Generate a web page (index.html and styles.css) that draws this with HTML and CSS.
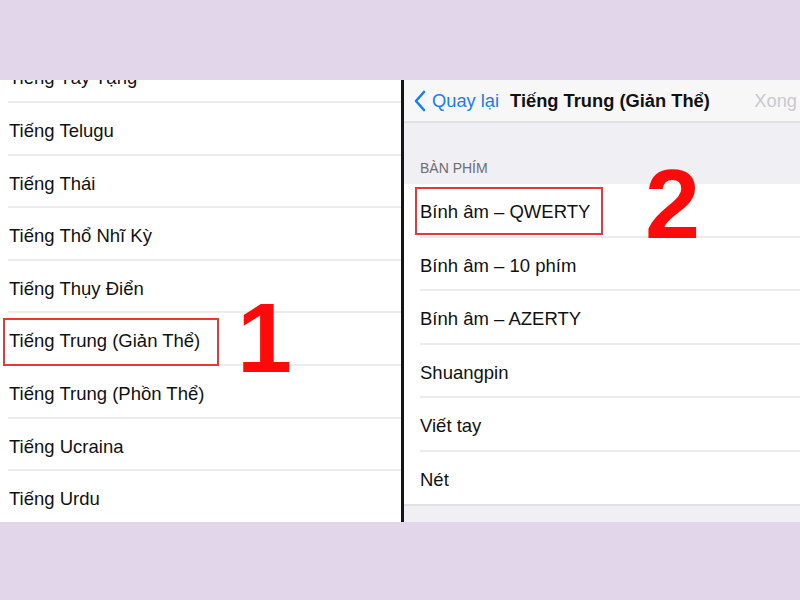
FILE: index.html
```html
<!DOCTYPE html>
<html lang="vi">
<head>
<meta charset="utf-8">
<link rel="stylesheet" href="styles.css">
</head>
<body>
<div class="band"></div>
<main class="screens">
  <section class="left">
    <ul class="list">
      <li class="row">Tiếng Tày Tạng</li>
      <li class="row">Tiếng Telugu</li>
      <li class="row">Tiếng Thái</li>
      <li class="row">Tiếng Thổ Nhĩ Kỳ</li>
      <li class="row">Tiếng Thụy Điển</li>
      <li class="row marked">Tiếng Trung (Giản Thể)<span class="redbox box1"></span></li>
      <li class="row">Tiếng Trung (Phồn Thể)</li>
      <li class="row">Tiếng Ucraina</li>
      <li class="row last">Tiếng Urdu</li>
    </ul>
    <span class="step step1">1</span>
  </section>
  <div class="divider"></div>
  <section class="right">
    <header class="nav">
      <span class="back">
        <svg class="chev" width="13" height="22" viewBox="0 0 13 22"><path d="M11 2 L3 11 L11 20" fill="none" stroke="#1a7cf5" stroke-width="2.6" stroke-linecap="round" stroke-linejoin="round"/></svg>
        <span class="back-label">Quay lại</span>
      </span>
      <span class="title">Tiếng Trung (Giản Thể)</span>
      <span class="done">Xong</span>
    </header>
    <div class="section-head">BÀN PHÍM</div>
    <ul class="group">
      <li class="grow marked">Bính âm – QWERTY<span class="redbox box2"></span></li>
      <li class="grow">Bính âm – 10 phím</li>
      <li class="grow">Bính âm – AZERTY</li>
      <li class="grow">Shuangpin</li>
      <li class="grow">Viết tay</li>
      <li class="grow last">Nét</li>
    </ul>
    <span class="step step2">2</span>
  </section>
</main>
<div class="band"></div>
</body>
</html>
```

FILE: styles.css
```css
html, body {
  margin: 0;
  padding: 0;
}
body {
  width: 800px;
  height: 600px;
  overflow: hidden;
  background: #e2d7ea;
  font-family: "Liberation Sans", Arial, sans-serif;
  color: #111;
}
.band {
  height: 80px;
  background: #e2d7ea;
}
.band:last-child {
  height: 78px;
}
.screens {
  display: flex;
  height: 442px;
}
.left {
  position: relative;
  width: 401px;
  background: #fff;
  overflow: hidden;
}
.list {
  list-style: none;
  margin: -29.6px 0 0 8px;
  padding: 0;
}
.row {
  position: relative;
  height: 44.6px;
  padding: 6px 0 0 1px;
  border-bottom: 2px solid #ececec;
  display: flex;
  align-items: center;
  font-size: 18.5px;
  line-height: 1;
}
.row.last {
  border-bottom: none;
}
.redbox {
  position: absolute;
  border: 2px solid #e5383b;
  box-sizing: border-box;
}
.box1 {
  left: -5px;
  top: 5px;
  width: 216px;
  height: 48px;
}
.box2 {
  left: -5px;
  top: 3px;
  width: 188px;
  height: 48px;
}
.step {
  position: absolute;
  font-family: "Liberation Sans", Arial, sans-serif;
  font-weight: 700;
  font-size: 99px;
  line-height: 1;
  color: #ff0a0a;
}
.step1 {
  left: 237px;
  top: 208px;
}
.step2 {
  left: 241px;
  top: 74px;
}
.divider {
  width: 3px;
  background: #151515;
}
.right {
  position: relative;
  flex: 1;
  background: #efeff4;
  overflow: hidden;
}
.nav {
  height: 41px;
  background: #f7f7f8;
  border-bottom: 2px solid #e1e1e4;
  display: flex;
  align-items: center;
  font-size: 18.3px;
  padding-left: 9px;
}
.back {
  display: flex;
  align-items: center;
  color: #1a7cf5;
}
.chev {
  display: block;
}
.back-label {
  margin-left: 6px;
}
.title {
  font-weight: 700;
  margin-left: 11px;
}
.done {
  margin-left: auto;
  margin-right: 3px;
  color: #c9c9cc;
}
.section-head {
  height: 61px;
  box-sizing: border-box;
  display: flex;
  align-items: flex-end;
  padding: 0 0 8px 16px;
  font-size: 14px;
  color: #6d6d72;
}
.group {
  list-style: none;
  margin: 0;
  padding: 0 0 0 16px;
  background: #fff;
  border-bottom: 2px solid #e1e1e4;
}
.grow {
  position: relative;
  height: 46.5px;
  padding-top: 5px;
  border-bottom: 2px solid #ececec;
  display: flex;
  align-items: center;
  font-size: 18.5px;
  line-height: 1;
}
.grow.last {
  border-bottom: none;
  height: 47px;
}
```
